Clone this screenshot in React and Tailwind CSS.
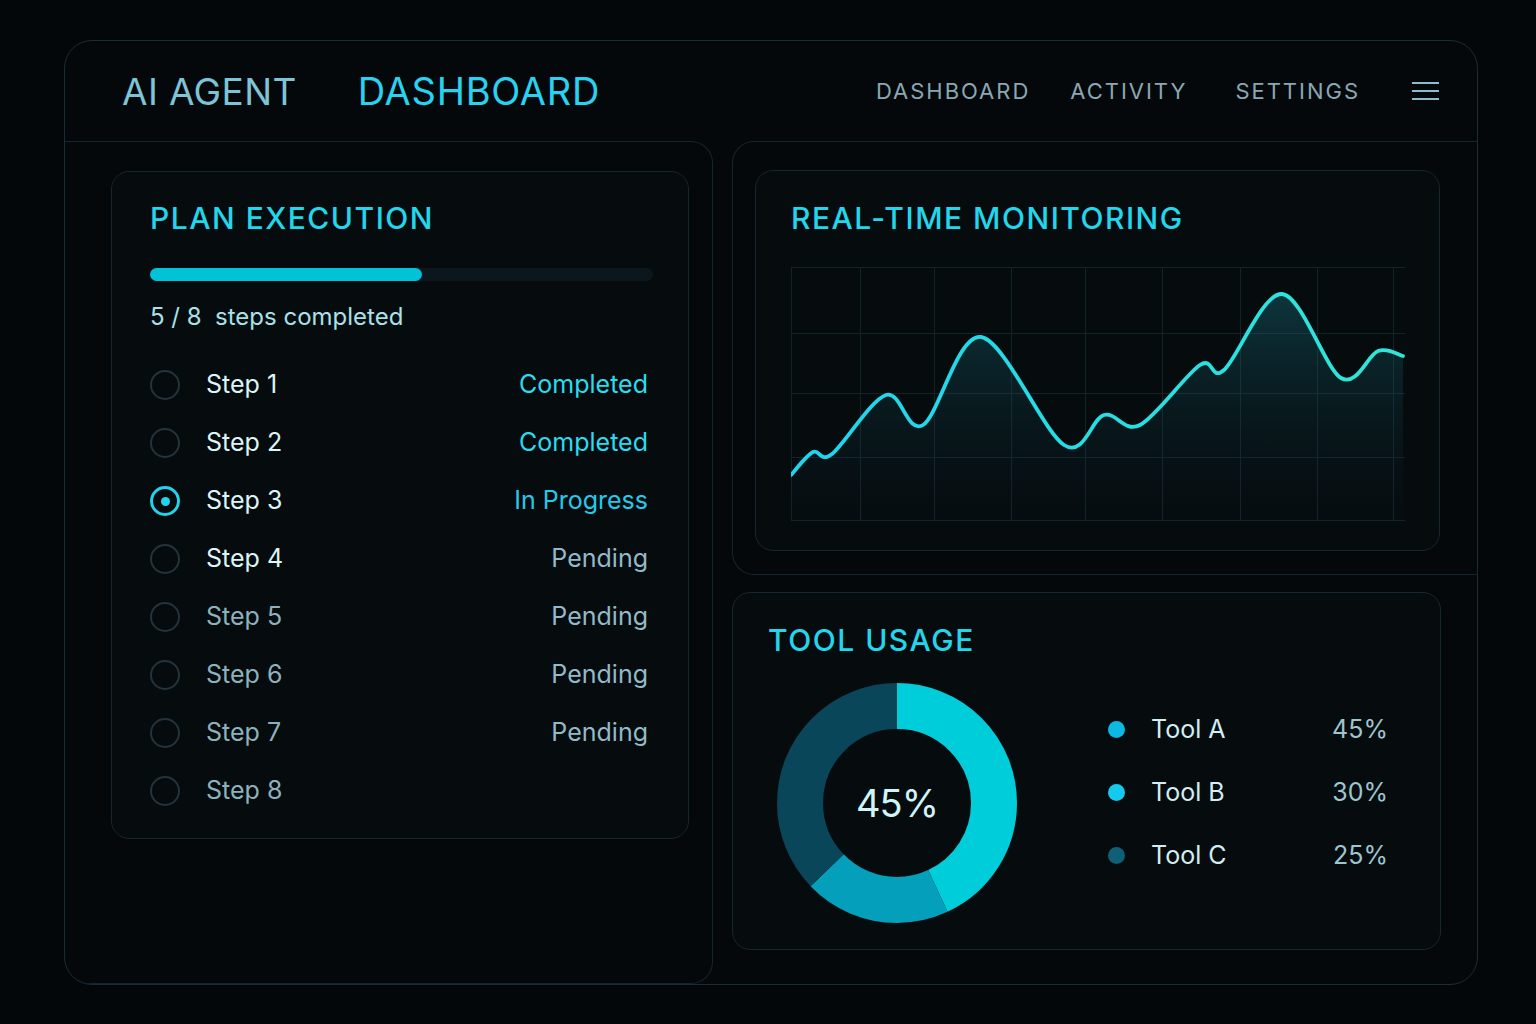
import React from 'react';

const steps = [
  { n: 1, status: 'Completed' },
  { n: 2, status: 'Completed' },
  { n: 3, status: 'In Progress', active: true },
  { n: 4, status: 'Pending' },
  { n: 5, status: 'Pending', dim: true },
  { n: 6, status: 'Pending', dim: true },
  { n: 7, status: 'Pending', dim: true },
  { n: 8, status: '', dim: true },
];

const tools = [
  { name: 'Tool A', pct: '45%', dot: 'bg-[#0bb9e2]' },
  { name: 'Tool B', pct: '30%', dot: 'bg-[#14cbef]' },
  { name: 'Tool C', pct: '25%', dot: 'bg-[#0f5f77]' },
];

// chart points in px, relative to the grid's top-left corner
const points = [
  [0, 208], [22, 185], [41, 187], [95, 128], [132, 158], [190, 70],
  [273, 178], [313, 148], [349, 158], [409, 98], [433, 103], [491, 27],
  [550, 111], [587, 84], [612, 89],
];

function smoothPath(pts) {
  let d = `M${pts[0][0]},${pts[0][1]}`;
  for (let i = 0; i < pts.length - 1; i++) {
    const p0 = pts[i - 1] || pts[i];
    const p1 = pts[i];
    const p2 = pts[i + 1];
    const p3 = pts[i + 2] || p2;
    const c1 = [p1[0] + (p2[0] - p0[0]) / 6, p1[1] + (p2[1] - p0[1]) / 6];
    const c2 = [p2[0] - (p3[0] - p1[0]) / 6, p2[1] - (p3[1] - p1[1]) / 6];
    d += ` C${c1[0]},${c1[1]} ${c2[0]},${c2[1]} ${p2[0]},${p2[1]}`;
  }
  return d;
}

function LineChart() {
  const line = smoothPath(points);
  const area = `${line} L612,253 L0,253 Z`;
  const vLines = [0, 69, 143, 220, 294, 371, 449, 526, 602];
  const hLines = [0, 66, 126, 190, 253];
  return (
    <svg width="616" height="256" viewBox="0 0 616 256" className="block">
      <defs>
        <linearGradient id="areaFill" x1="0" y1="0" x2="0" y2="1">
          <stop offset="0%" stopColor="#1b8f9e" stopOpacity="0.32" />
          <stop offset="100%" stopColor="#0a2a33" stopOpacity="0.05" />
        </linearGradient>
        <linearGradient id="lineStroke" x1="0" y1="0" x2="1" y2="0">
          <stop offset="0%" stopColor="#1ed4ee" />
          <stop offset="100%" stopColor="#30e6d8" />
        </linearGradient>
      </defs>
      {hLines.map((y) => (
        <line key={'h' + y} x1="0" x2="614" y1={y + 0.5} y2={y + 0.5} stroke="#13232a" strokeWidth="1" />
      ))}
      {vLines.map((x) => (
        <line key={'v' + x} x1={x + 0.5} x2={x + 0.5} y1="0" y2="253" stroke="#13232a" strokeWidth="1" />
      ))}
      <path d={area} fill="url(#areaFill)" />
      <path d={line} fill="none" stroke="url(#lineStroke)" strokeWidth="3.8" strokeLinecap="round" />
    </svg>
  );
}

function Donut() {
  const r = 97;
  const c = 2 * Math.PI * r;
  const segs = [
    { from: 0, len: 0.43, color: '#00cdda' },
    { from: 0.43, len: 0.197, color: '#039fbb' },
    { from: 0.627, len: 0.373, color: '#0a465a' },
  ];
  return (
    <div className="relative w-[240px] h-[240px]">
      <svg width="240" height="240" viewBox="0 0 240 240" className="-rotate-90">
        {segs.map((s, i) => (
          <circle
            key={i}
            cx="120"
            cy="120"
            r={r}
            fill="none"
            stroke={s.color}
            strokeWidth="46"
            strokeDasharray={`${s.len * c} ${c}`}
            strokeDashoffset={-s.from * c}
          />
        ))}
      </svg>
      <div className="absolute inset-0 flex items-center justify-center text-[38px] text-[#cff5f8] tracking-tight">
        45%
      </div>
    </div>
  );
}

export default function App() {
  return (
    <div className="min-h-screen w-full bg-[#03070a] pt-[40px] pl-[64px] font-['Inter','Liberation_Sans',sans-serif]">
      <div className="w-[1414px] h-[945px] rounded-[28px] border border-[#1c2c36] bg-[#04080b] flex flex-col overflow-hidden">
        {/* Header */}
        <header className="h-[100px] flex items-center pl-[57px] pr-[38px] shrink-0">
          <div className="flex items-center leading-none">
            <span className="text-[37px] tracking-[0.01em] text-[#7cc4d6]">AI AGENT</span>
            <span className="ml-[61px] text-[38px] tracking-[0.02em] text-[#27d3f0]">DASHBOARD</span>
          </div>
          <nav className="ml-auto flex items-center text-[22px] leading-none tracking-[0.09em] text-[#89a8b3]">
            <span>DASHBOARD</span>
            <span className="ml-[40px]">ACTIVITY</span>
            <span className="ml-[48px]">SETTINGS</span>
            <div className="ml-[52px] flex flex-col gap-[6px]">
              <div className="h-[2px] w-[27px] bg-[#8fbccb]" />
              <div className="h-[2px] w-[27px] bg-[#8fbccb]" />
              <div className="h-[2px] w-[27px] bg-[#8fbccb]" />
            </div>
          </nav>
        </header>

        <div className="flex flex-1">
          {/* Left column */}
          <div className="w-[648px] border-t border-r border-b border-[#15252d] rounded-tr-[22px] rounded-br-[22px] pl-[46px] pt-[29px]">
            <div className="w-[578px] h-[668px] rounded-[18px] border border-[#17272f] bg-[#060b0e] pl-[38px] pr-[40px] pt-[31px]">
              <h2 className="text-[30px] leading-none font-medium tracking-[0.05em] text-[#22d6ec]">PLAN EXECUTION</h2>
              <div className="mt-[35px] h-[13px] w-[503px] rounded-full bg-[#0c171d]">
                <div className="h-full w-[272px] rounded-full bg-[#00c3d8]" />
              </div>
              <p className="mt-[20px] text-[24px] leading-[32px] text-[#a9e1ea] whitespace-pre">5 / 8  steps completed</p>
              <ul className="mt-[23px] flex flex-col">
                {steps.map((s) => (
                  <li key={s.n} className="h-[58px] flex items-center">
                    {s.active ? (
                      <div className="w-[30px] h-[30px] rounded-full border-[3px] border-[#22d3ee] flex items-center justify-center">
                        <div className="w-[9px] h-[9px] rounded-full bg-[#22d3ee]" />
                      </div>
                    ) : (
                      <div className="w-[30px] h-[30px] rounded-full border-2 border-[#24343c]" />
                    )}
                    <span className={`ml-[26px] text-[25px] ${s.dim ? 'text-[#8db2be]' : 'text-[#dcf5f9]'}`}>
                      Step {s.n}
                    </span>
                    <span
                      className={`ml-auto text-[25px] ${
                        s.status === 'Completed'
                          ? 'text-[#2adcf0]'
                          : s.status === 'In Progress'
                          ? 'text-[#25c9ea]'
                          : 'text-[#92bac8]'
                      }`}
                    >
                      {s.status}
                    </span>
                  </li>
                ))}
              </ul>
            </div>
          </div>

          {/* Right column */}
          <div className="flex-1 ml-[19px] flex flex-col">
            <div className="h-[434px] border-l border-t border-b border-[#15252d] rounded-l-[22px] pl-[22px] pt-[28px]">
              <div className="w-[685px] h-[381px] rounded-[18px] border border-[#17272f] bg-[#060b0e] pl-[35px] pt-[32px]">
                <h2 className="text-[30px] leading-none font-medium tracking-[0.05em] text-[#22d6ec]">REAL-TIME MONITORING</h2>
                <div className="mt-[34px]">
                  <LineChart />
                </div>
              </div>
            </div>

            <div className="mt-[17px] w-[709px] h-[358px] rounded-[18px] border border-[#17272f] bg-[#060b0e] pl-[35px] pt-[32px]">
              <h2 className="text-[30px] leading-none font-medium tracking-[0.05em] text-[#22d6ec]">TOOL USAGE</h2>
              <div className="mt-[28px] flex items-start">
                <div className="ml-[9px]">
                  <Donut />
                </div>
                <div className="ml-[91px] mt-[15px] w-[280px] flex flex-col">
                  {tools.map((t) => (
                    <div key={t.name} className="h-[63px] flex items-center">
                      <div className={`w-[17px] h-[17px] rounded-full ${t.dot}`} />
                      <span className="ml-[26px] text-[25px] text-[#d2eef4]">{t.name}</span>
                      <span className="ml-auto text-[25px] text-[#9cc6d0]">{t.pct}</span>
                    </div>
                  ))}
                </div>
              </div>
            </div>
          </div>
        </div>
      </div>
    </div>
  );
}
